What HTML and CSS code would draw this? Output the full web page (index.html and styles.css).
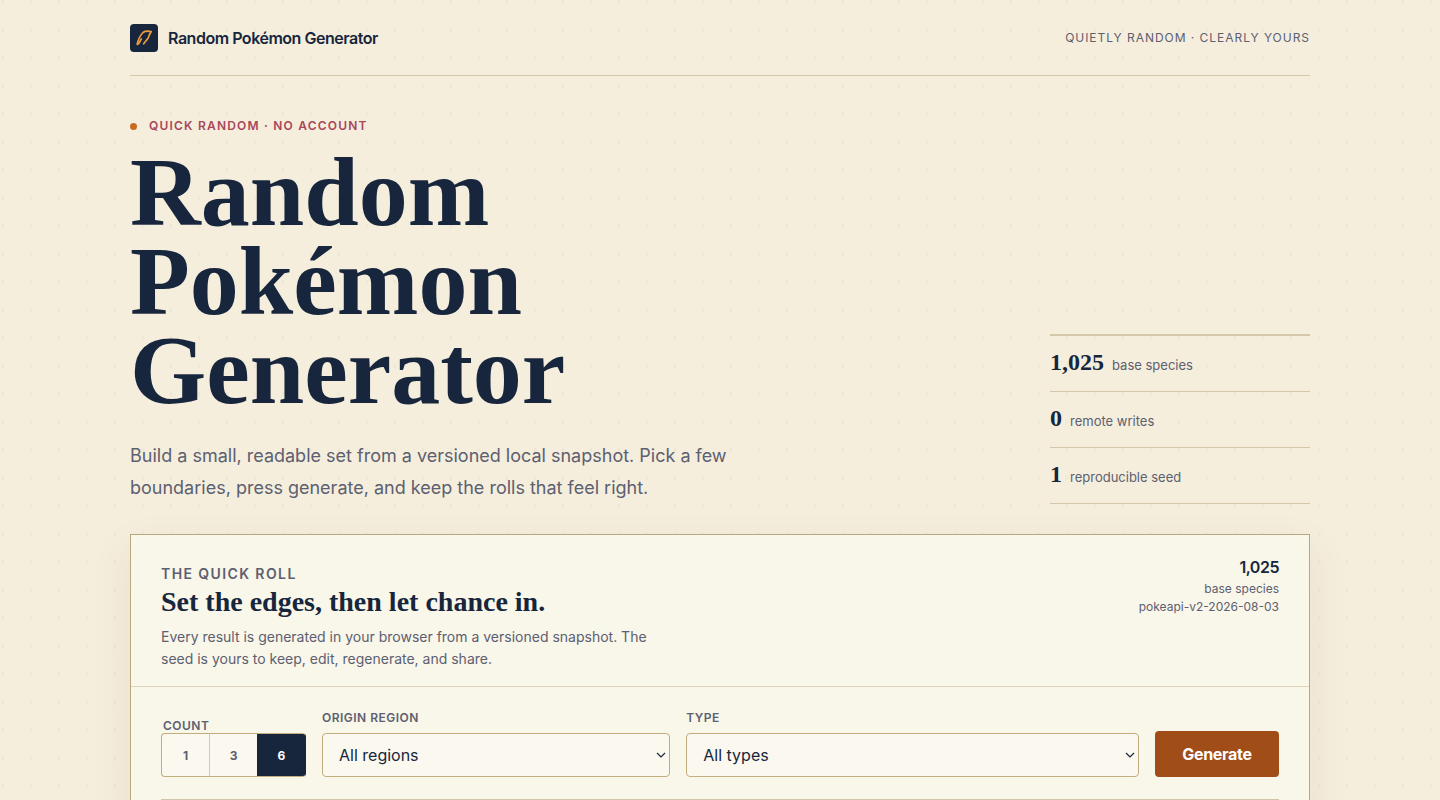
FILE: index.html
```html
<!DOCTYPE html>
<html lang="en">
<head>
    <meta charset="UTF-8">
    <meta name="viewport" content="width=device-width, initial-scale=1.0">
    <title>Random Pokémon Generator</title>
    <link rel="stylesheet" href="styles.css">
</head>
<body>
    <div class="wrap">
        <header class="topbar">
            <a class="brand" href="#">
                <svg class="brand-mark" viewBox="0 0 28 28" aria-hidden="true">
                    <rect width="28" height="28" rx="4" fill="#17263c"/>
                    <path d="M7.200 20.300 C8 16.500 10 11.500 13 8.500 C15.200 7 18 6.900 21.200 7.600 C19.800 9.300 19 12 18 14.200 C16.500 16.300 15 17.800 13.700 19.800 M7.800 20.300 C9.500 19.300 10 17 11.300 15" fill="none" stroke="#ef9b3c" stroke-width="1.700" stroke-linecap="round" stroke-linejoin="round"/>
                </svg>
                Random Pokémon Generator
            </a>
            <p class="tagline">Quietly random · Clearly yours</p>
        </header>

        <main>
            <section class="hero">
                <div class="hero-copy">
                    <p class="eyebrow">Quick random · No account</p>
                    <h1>Random<br>Pokémon<br>Generator</h1>
                    <p class="lede">Build a small, readable set from a versioned local snapshot. Pick a few boundaries, press generate, and keep the rolls that feel right.</p>
                </div>
                <ul class="stats">
                    <li><strong>1,025</strong> <span>base species</span></li>
                    <li><strong>0</strong> <span>remote writes</span></li>
                    <li><strong>1</strong> <span>reproducible seed</span></li>
                </ul>
            </section>

            <section class="panel">
                <div class="panel-head">
                    <div class="panel-copy">
                        <p class="kicker">The quick roll</p>
                        <h2>Set the edges, then let chance in.</h2>
                        <p class="panel-text">Every result is generated in your browser from a versioned snapshot. The seed is yours to keep, edit, regenerate, and share.</p>
                    </div>
                    <p class="snapshot">
                        <strong>1,025</strong>
                        <span>base species</span>
                        <span>pokeapi-v2-2026-08-03</span>
                    </p>
                </div>

                <form class="controls">
                    <fieldset class="count">
                        <legend>Count</legend>
                        <div class="segments">
                            <label><input type="radio" name="count" value="1"><span>1</span></label>
                            <label><input type="radio" name="count" value="3"><span>3</span></label>
                            <label><input type="radio" name="count" value="6" checked><span>6</span></label>
                        </div>
                    </fieldset>
                    <div class="field">
                        <label for="region">Origin region</label>
                        <select id="region" name="region">
                            <option>All regions</option>
                        </select>
                    </div>
                    <div class="field">
                        <label for="type">Type</label>
                        <select id="type" name="type">
                            <option>All types</option>
                        </select>
                    </div>
                    <button class="generate" type="button">Generate</button>
                </form>
                <div class="results"></div>
            </section>
        </main>
    </div>
</body>
</html>
```
FILE: styles.css
```css
* {
    box-sizing: border-box;
}

body {
    margin: 0;
    font-family: Inter, "Liberation Sans", sans-serif;
    color: #17263c;
    background-color: #f5eedd;
    background-image: radial-gradient(ellipse 2px 3px at 3px 2px, rgba(23, 38, 60, 0.05), transparent);
    background-size: 28px 28px;
}

h1,
h2,
p {
    margin: 0;
}

.wrap {
    width: min(1180px, 100% - 48px);
    margin: 0 auto;
}

.topbar {
    display: flex;
    align-items: center;
    justify-content: space-between;
    height: 76px;
    border-bottom: 1px solid #d5c8a8;
}

.brand {
    display: flex;
    align-items: center;
    gap: 10px;
    color: inherit;
    font-size: 16px;
    font-weight: 600;
    letter-spacing: -0.03em;
    text-decoration: none;
}

.brand-mark {
    width: 28px;
    height: 28px;
}

.tagline {
    color: #5c6070;
    font-size: 12px;
    letter-spacing: 0.08em;
    text-transform: uppercase;
}

.hero {
    display: flex;
    align-items: flex-end;
    justify-content: space-between;
    gap: 48px;
    padding: 42px 0 30px;
}

.eyebrow {
    display: flex;
    align-items: center;
    gap: 12px;
    margin-bottom: 14px;
    color: #a8475a;
    font-size: 12px;
    font-weight: 600;
    line-height: 16px;
    letter-spacing: 0.1em;
    text-transform: uppercase;
}

.eyebrow::before {
    content: "";
    width: 7px;
    height: 7px;
    border-radius: 50%;
    background: #c96a20;
}

h1,
h2,
.stats strong {
    font-family: "Liberation Serif", serif;
    font-weight: 700;
}

h1 {
    font-size: 98px;
    line-height: 89px;
}

.lede {
    max-width: 610px;
    margin-top: 25px;
    color: #5c6070;
    font-size: 18px;
    line-height: 32px;
}

.stats {
    width: 260px;
    margin: 0;
    padding: 0;
    list-style: none;
    border-top: 2px solid #d5c8a8;
}

.stats li {
    display: flex;
    align-items: baseline;
    gap: 8px;
    padding: 12px 0;
    border-bottom: 1px solid #d5c8a8;
    line-height: 28px;
}

.stats strong {
    font-size: 24px;
}

.stats span {
    color: #5c6070;
    font-size: 13px;
}

.panel {
    border: 1px solid #b9a97f;
    background: #f9f6ea;
    box-shadow: 0 16px 40px rgba(120, 80, 30, 0.09);
}

.panel-head {
    display: flex;
    justify-content: space-between;
    gap: 32px;
    padding: 22px 30px 16px;
    border-bottom: 1px solid #ddd4b8;
}

.panel-copy {
    max-width: 490px;
    padding-top: 8px;
}

.kicker {
    margin-bottom: 3px;
    color: #5c6070;
    font-size: 14px;
    font-weight: 600;
    line-height: 18px;
    letter-spacing: 0.1em;
    text-transform: uppercase;
}

h2 {
    font-size: 28px;
    line-height: 32px;
}

.panel-text {
    margin-top: 8px;
    color: #5c6070;
    font-size: 14px;
    line-height: 22px;
}

.snapshot {
    display: flex;
    flex-direction: column;
    align-items: flex-end;
    color: #5c6070;
    font-size: 12px;
    line-height: 18px;
}

.snapshot strong {
    margin-bottom: 3px;
    color: #17263c;
    font-size: 16px;
    font-weight: 600;
    line-height: 20px;
    letter-spacing: -0.03em;
}

.controls {
    display: grid;
    grid-template-columns: 145px 1fr 1.3fr 124px;
    gap: 16px;
    align-items: end;
    padding: 23px 30px 22px;
}

.count {
    min-width: 0;
    margin: 0;
    padding: 0;
    border: 0;
}

.count legend,
.field > label {
    color: #5c6070;
    font-size: 12px;
    font-weight: 600;
    line-height: 15px;
    letter-spacing: 0.04em;
    text-transform: uppercase;
}

.count legend {
    padding: 0 2px;
}

.field {
    display: flex;
    flex-direction: column;
    gap: 8px;
}

.segments {
    display: flex;
    height: 44px;
    overflow: hidden;
    border: 1px solid #c4ad7c;
    border-radius: 4px;
    background: #fbf8ef;
}

.segments label {
    display: flex;
    flex: 1;
    cursor: pointer;
}

.segments label + label {
    border-left: 1px solid #d5c8a8;
}

.segments input {
    position: absolute;
    opacity: 0;
}

.segments span {
    display: flex;
    flex: 1;
    align-items: center;
    justify-content: center;
    color: #5c6070;
    font-size: 12px;
    font-weight: 700;
}

.segments input:checked + span {
    color: #fff;
    background: #17263c;
    box-shadow: 0 0 0 1px #17263c;
}

.segments:has(label:last-child input:checked) {
    border-right-color: #17263c;
}

.field select {
    width: 100%;
    height: 44px;
    padding: 0 16px;
    border: 1px solid #c4ad7c;
    border-radius: 4px;
    color: #17263c;
    background: #fbf8ef url("data:image/svg+xml,%3Csvg xmlns='http://www.w3.org/2000/svg' width='10' height='6'%3E%3Cpath d='M1 1l4 4 4-4' fill='none' stroke='%2317263c' stroke-width='1.2'/%3E%3C/svg%3E") no-repeat right 3px center;
    appearance: none;
    font-family: inherit;
    font-size: 16px;
}

.generate {
    height: 46px;
    border: 0;
    border-radius: 4px;
    color: #fff;
    background: #a04d18;
    font-family: inherit;
    font-size: 16px;
    font-weight: 700;
    letter-spacing: -0.02em;
    cursor: pointer;
}

.results {
    min-height: 60px;
    margin: 0 30px;
    border-top: 1px solid #d0c8a8;
}
```
